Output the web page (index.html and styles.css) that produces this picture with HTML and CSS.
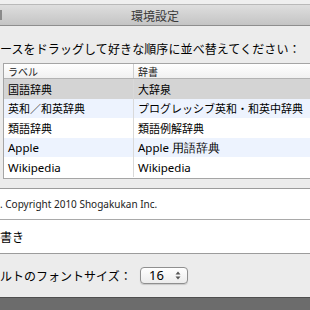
FILE: index.html
```html
<!DOCTYPE html>
<html lang="ja">
<head>
    <meta charset="UTF-8">
    <title>環境設定</title>
    <link rel="stylesheet" href="styles.css">
</head>
<body>
    <div class="window">
        <div class="top-strip"></div>
        <div class="titlebar">
            <span class="edge"></span>
            <span class="title">環境設定</span>
        </div>
        <div class="pane">
            <p class="hint">ースをドラッグして好きな順序に並べ替えてください：</p>
            <div class="table">
                <div class="row head">
                    <div class="cell label">ラベル</div>
                    <div class="cell dict">辞書</div>
                </div>
                <div class="row selected">
                    <div class="cell label">国語辞典</div>
                    <div class="cell dict">大辞泉</div>
                </div>
                <div class="row alt">
                    <div class="cell label">英和／和英辞典</div>
                    <div class="cell dict">プログレッシブ英和・和英中辞典</div>
                </div>
                <div class="row">
                    <div class="cell label">類語辞典</div>
                    <div class="cell dict">類語例解辞典</div>
                </div>
                <div class="row alt">
                    <div class="cell label latin">Apple</div>
                    <div class="cell dict latin">Apple 用語辞典</div>
                </div>
                <div class="row">
                    <div class="cell label latin">Wikipedia</div>
                    <div class="cell dict latin">Wikipedia</div>
                </div>
                <div class="row filler"></div>
            </div>
            <div class="fields">
                <div class="field copy">. Copyright 2010 Shogakukan Inc.</div>
                <div class="field">書き</div>
            </div>
            <div class="font-row">
                <span class="font-label">ルトのフォントサイズ：</span>
                <div class="select">
                    <span class="value">16</span>
                    <svg class="arrows" width="6" height="9" viewBox="0 0 6 9">
                        <path d="M3 0.5 L5.5 3.5 L0.5 3.5 Z" fill="#555"/>
                        <path d="M3 8.5 L5.5 5.5 L0.5 5.5 Z" fill="#555"/>
                    </svg>
                </div>
            </div>
        </div>
        <div class="bottom-bar"></div>
    </div>
</body>
</html>
```

FILE: styles.css
```css
body{
    margin:0;
    background:#ececec;
    font-family:"Lucida Grande","Noto Sans","Noto Sans CJK JP",sans-serif;
    color:#000;
}
.window{
    width:310px;
    height:310px;
    overflow:hidden;
    display:flex;
    flex-direction:column;
    background:#ececec;
}
.top-strip{
    height:4px;
    background:#efefef;
    border-bottom:1px solid #b9b9b9;
}
.titlebar{
    height:20px;
    display:flex;
    align-items:center;
    justify-content:center;
    background:linear-gradient(#dedede,#c4c4c4);
    border-bottom:1px solid #8e8e8e;
    position:relative;
}
.edge{
    position:absolute;
    left:0;
    top:5px;
    width:2px;
    height:10px;
    background:#8a8a8a;
}
.title{
    font-family:"Noto Sans CJK JP",sans-serif;
    font-size:12px;
    color:#3a3a3a;
}
.pane{
    flex:1;
    display:flex;
    flex-direction:column;
}
.hint{
    margin:16px 0 0 0;
    height:21px;
    font-family:"Noto Sans CJK JP",sans-serif;
    font-size:12px;
    line-height:13px;
    white-space:nowrap;
    letter-spacing:0.1px;
}
.table{
    margin-left:3px;
    width:320px;
    border:1px solid #a5a5a5;
    border-right:0;
    background:#fff;
    font-size:11px;
}
.row{
    height:19.6px;
    display:flex;
    align-items:center;
    background:#fff;
}
.row.head{
    height:14px;
    background:linear-gradient(#ffffff,#f1f1f1);
    border-bottom:1px solid #b3b3b3;
    font-size:10px;
    color:#222;
}
.row.selected{
    background:#d4d4d4;
}
.row.alt{
    background:#edf3fe;
}
.row.filler{
    height:1px;
}
.cell{
    font-family:"Noto Sans CJK JP",sans-serif;
    white-space:nowrap;
    padding-left:4px;
    height:100%;
    display:flex;
    align-items:center;
}
.cell.label{
    width:125px;
    border-right:1px solid #d9d9d9;
}
.head .cell.label{
    border-right:1px solid #cfcfcf;
}
.cell.latin{
    font-family:"Lucida Grande","Noto Sans",sans-serif;
    font-size:11.5px;
}
.fields{
    margin-top:9px;
    background:#fff;
    border-top:1px solid #9c9c9c;
    border-bottom:1px solid #9c9c9c;
}
.field{
    height:30px;
    display:flex;
    align-items:center;
    font-family:"Noto Sans CJK JP",sans-serif;
    font-size:11px;
    white-space:nowrap;
}
.field + .field{
    height:33px;
    border-top:1px solid #a9a9a9;
    font-size:12px;
}
.field.copy{
    font-family:"Lucida Grande","Noto Sans",sans-serif;
    font-size:10px;
    color:#222;
}
.font-row{
    margin-top:13px;
    display:flex;
    align-items:center;
    gap:12px;
}
.font-label{
    font-family:"Noto Sans CJK JP",sans-serif;
    font-size:12px;
    white-space:nowrap;
    width:128px;
}
.select{
    width:48px;
    height:17px;
    border:1px solid #8f8f8f;
    border-radius:4px;
    background:linear-gradient(#ffffff,#ececec);
    display:flex;
    align-items:center;
    justify-content:space-between;
    padding:0 6px 0 8px;
    box-sizing:border-box;
    box-shadow:0 1px 1px rgba(0,0,0,0.15);
}
.value{
    font-family:"Lucida Grande","Noto Sans",sans-serif;
    font-size:13px;
}
.bottom-bar{
    height:12px;
    margin-top:auto;
    background:#6c6c6c;
    border-top:1px solid #4e4e4e;
}
```
